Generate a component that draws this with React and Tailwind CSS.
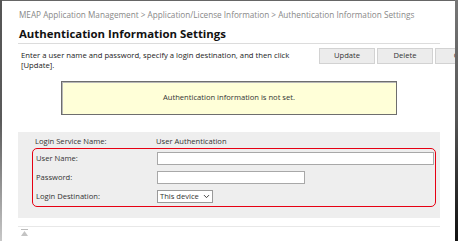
import { ChevronDown } from 'lucide-react';

const Button = ({ children }) => (
  <button className="w-[56px] h-[16px] shrink-0 bg-[#ececec] border border-[#d2d2d2] text-[7.6px] text-[#333] leading-none">
    {children}
  </button>
);

const Row = ({ label, children, h = 'h-[19px]' }) => (
  <div className={`flex items-center ${h}`}>
    <div className="w-[124px] pl-[3px] text-[7.6px] text-[#333]">{label}</div>
    {children}
  </div>
);

export default function App() {
  return (
    <div className="flex w-[458px] h-[241px] overflow-hidden bg-white font-['Open_Sans',sans-serif]">
      {/* left frame */}
      <div className="w-[2px] shrink-0 bg-gradient-to-b from-[#555] via-[#5a5a5a] to-[#c8c8c8]" />

      {/* page */}
      <div className="flex-1 min-w-0 border-t border-[#666] overflow-hidden">
        <div className="pl-[16px] w-[440px]">
          {/* breadcrumb */}
          <div className="pt-[8px] pl-[1px] text-[8.2px] leading-[12px] text-[#888] whitespace-nowrap">
            MEAP Application Management &gt; Application/License Information &gt; Authentication Information Settings
          </div>

          {/* title */}
          <h1 className="mt-[5px] pl-[1px] text-[11.4px] font-bold leading-[16px] text-[#111] whitespace-nowrap">
            Authentication Information Settings
          </h1>
          <div className="mt-[1px] w-[422px] h-px bg-[#dcdcdc]" />

          {/* description + buttons */}
          <div className="flex mt-[4px] w-[460px]">
            <p className="w-[301px] shrink-0 pl-[3px] pr-[16px] pt-[3px] text-[7.7px] leading-[9.5px] text-[#222]">
              Enter a user name and password, specify a login destination, and then click [Update].
            </p>
            <div className="flex gap-[2px]">
              <Button>Update</Button>
              <Button>Delete</Button>
              <Button>Clear</Button>
            </div>
          </div>

          {/* message */}
          <div className="mt-[11px] ml-[43px] w-[336px] h-[34px] flex items-center justify-center bg-[#ffffd8] border border-[#6e6e6e] shadow-[inset_1px_1px_0_#b8b8b8] text-[7.6px] text-[#333]">
            Authentication information is not set.
          </div>

          {/* settings panel */}
          <div className="mt-[17px] w-[422px] h-[86px] bg-[#eeeeee] pl-[14px] pr-[4px]">
            <Row label="Login Service Name:" h="h-[20px]">
              <span className="text-[7.6px] text-[#333]">User Authentication</span>
            </Row>
            <div className="-mt-[4px] border-[1.5px] border-[#e60012] rounded-[5px]">
              <Row label="User Name:">
                <div className="w-[277px] h-[13px] bg-white border border-[#a8a8a8]" />
              </Row>
              <Row label="Password:">
                <div className="w-[148px] h-[13px] bg-white border border-[#a8a8a8]" />
              </Row>
              <Row label="Login Destination:">
                <div className="flex items-center gap-[3px] h-[13px] bg-white border border-[#9a9a9a] pl-[2px] pr-[1px] text-[7.6px] text-[#333] leading-none whitespace-nowrap">
                  This device
                  <ChevronDown size={9} strokeWidth={2.5} className="text-[#333]" />
                </div>
              </Row>
            </div>
          </div>

          {/* footer */}
          <div className="mt-[8px] w-[422px] h-px bg-[#e8e8e8]" />
          <div className="pl-[3px] pt-[2px]">
            <svg width="7" height="8" viewBox="0 0 7 8">
              <rect x="0" y="0" width="7" height="1" fill="#bbb" />
              <path d="M3.5 2 L7 7 L0 7 Z" fill="#c4c4c4" />
            </svg>
          </div>
        </div>
      </div>

      {/* right frame */}
      <div className="w-[3px] shrink-0 bg-gradient-to-b from-[#777] via-[#555] to-[#111]" />
    </div>
  );
}
